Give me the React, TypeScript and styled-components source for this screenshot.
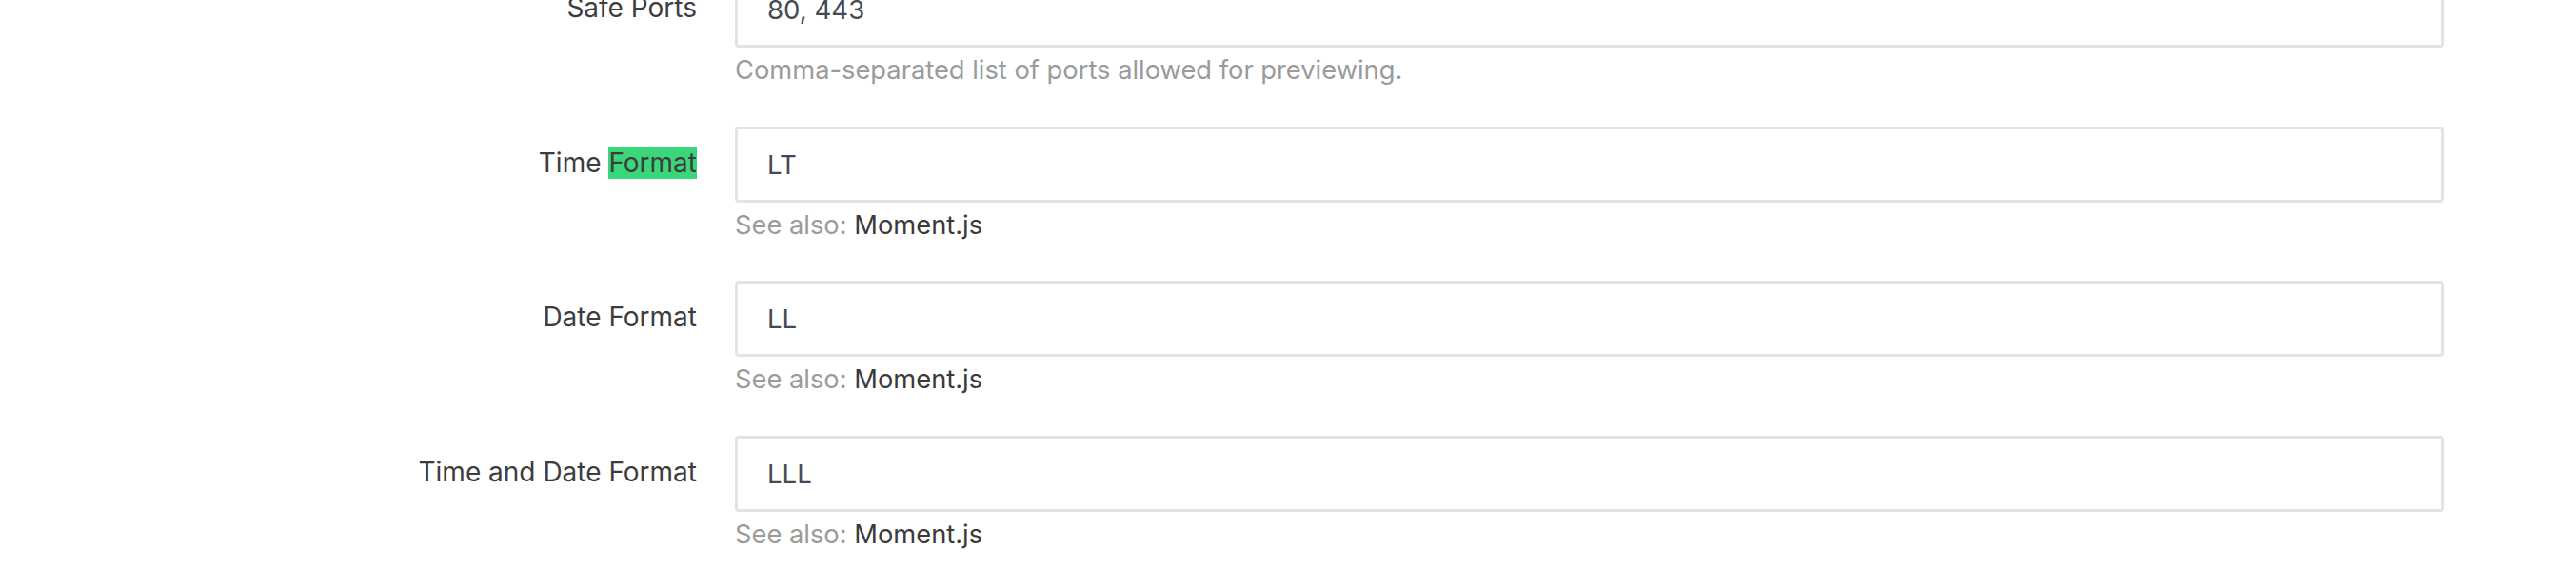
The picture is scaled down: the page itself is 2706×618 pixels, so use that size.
import React from "react";
import styled, { createGlobalStyle } from "styled-components";

const GlobalStyle = createGlobalStyle`
  html, body {
    margin: 0;
    padding: 0;
    background: #ffffff;
    overflow: hidden;
  }

  body {
    font-family: Inter, "Noto Sans", sans-serif;
    -webkit-font-smoothing: antialiased;
  }
`;

const Page = styled.div`
  width: 2706px;
  height: 618px;
  overflow: hidden;
`;

const Form = styled.form`
  display: grid;
  grid-template-columns: 732px 1795px;
  column-gap: 40px;
  row-gap: 39px;
  margin-top: -30px;
`;

const Label = styled.label`
  display: block;
  text-align: right;
  padding-top: 22px;
  font-size: 28px;
  line-height: 1.21;
  color: #3d3d40;
  white-space: nowrap;
`;

const Mark = styled.mark`
  background: #3ad77a;
  color: #3d3d40;
`;

const Field = styled.div`
  display: flex;
  flex-direction: column;
`;

const Input = styled.input`
  box-sizing: border-box;
  width: 100%;
  height: 80px;
  padding: 0 31px;
  border: 3px solid #e1e4e8;
  border-radius: 4px;
  background: #ffffff;
  font-family: Inter, "Noto Sans", sans-serif;
  font-size: 27.6px;
  color: #444a55;
  outline: none;
`;

const Help = styled.p`
  margin: 4px 0 0;
  font-size: 27.3px;
  line-height: 1.45;
  color: #9b9b9b;
`;

const HelpLink = styled.a`
  color: #3a3a3d;
  text-decoration: none;
`;

type Row = {
  label: React.ReactNode;
  value: string;
  help: React.ReactNode;
};

const seeAlso = (
  <>
    See also: <HelpLink href="#">Moment.js</HelpLink>
  </>
);

const rows: Row[] = [
  {
    label: "Safe Ports",
    value: "80, 443",
    help: "Comma-separated list of ports allowed for previewing.",
  },
  {
    label: (
      <>
        Time <Mark>Format</Mark>
      </>
    ),
    value: "LT",
    help: seeAlso,
  },
  { label: "Date Format", value: "LL", help: seeAlso },
  { label: "Time and Date Format", value: "LLL", help: seeAlso },
];

export default function App() {
  return (
    <>
      <GlobalStyle />
      <Page>
        <Form onSubmit={(e) => e.preventDefault()}>
          {rows.map((row, i) => (
            <React.Fragment key={i}>
              <Label>{row.label}</Label>
              <Field>
                <Input defaultValue={row.value} readOnly />
                <Help>{row.help}</Help>
              </Field>
            </React.Fragment>
          ))}
        </Form>
      </Page>
    </>
  );
}
